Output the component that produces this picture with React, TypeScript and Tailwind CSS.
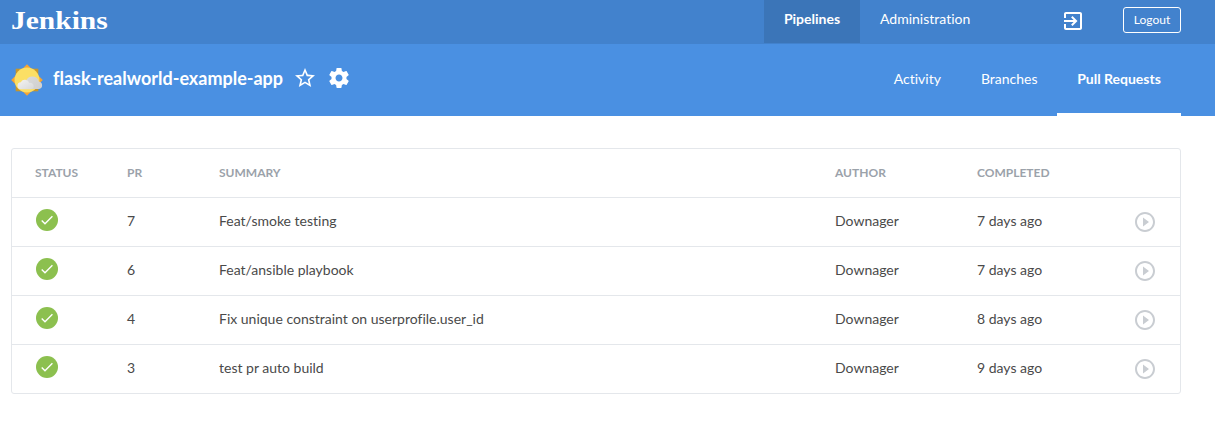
import React from "react";

const rows = [
  { pr: 7, summary: "Feat/smoke testing", author: "Downager", completed: "7 days ago" },
  { pr: 6, summary: "Feat/ansible playbook", author: "Downager", completed: "7 days ago" },
  { pr: 4, summary: "Fix unique constraint on userprofile.user_id", author: "Downager", completed: "8 days ago" },
  { pr: 3, summary: "test pr auto build", author: "Downager", completed: "9 days ago" },
];

const grid = "grid grid-cols-[92px_92px_616px_142px_156px_1fr] pl-[23px]";

function WeatherIcon() {
  return (
    <svg className="h-8 w-8" viewBox="0 0 32 32">
      <defs>
        <linearGradient id="cloud" x1="0" y1="0" x2="1" y2="1">
          <stop offset="0" stopColor="#dadada" />
          <stop offset="1" stopColor="#cfcfcf" />
        </linearGradient>
        <linearGradient id="cloudFront" x1="0" y1="0" x2="1" y2="1">
          <stop offset="0" stopColor="#f4f4f4" />
          <stop offset="1" stopColor="#d8d8d8" />
        </linearGradient>
      </defs>
      <path d="M4.700 4.700h22.600v22.600H4.700z" fill="#c7962b" />
      <path d="M16 .2 31.800 16 16 31.800.2 16z" fill="#f6a532" />
      <circle cx="16" cy="16" r="12.500" fill="#fbdf65" />
      <path d="M15 17.500a6.600 6.600 0 0 1 12.800 0 3.800 3.800 0 0 1 .2 7.500H17z" fill="url(#cloud)" />
      <path d="M10.200 25.200a3.500 3.500 0 0 1-.4-7 4.700 4.700 0 0 1 8.600.8 3.200 3.200 0 0 1 4.300 3 3.200 3.200 0 0 1-3 3.200z" fill="url(#cloudFront)" />
    </svg>
  );
}

function Glyph({ d, className }: { d: string; className: string }) {
  return (
    <svg viewBox="0 0 24 24" fill="currentColor" className={className}>
      <path d={d} />
    </svg>
  );
}

const STAR =
  "M22 9.240l-7.190-.620L12 2 9.190 8.630 2 9.240l5.460 4.730L5.820 21 12 17.270 18.180 21l-1.630-7.030L22 9.240zM12 15.400l-3.760 2.270 1-4.280-3.320-2.880 4.380-.380L12 6.100l1.710 4.040 4.380.380-3.320 2.880 1 4.280L12 15.400z";
const GEAR =
  "M19.430 12.980c.040-.320.070-.640.070-.980s-.030-.660-.070-.980l2.110-1.650c.190-.150.240-.420.120-.640l-2-3.460c-.120-.220-.390-.300-.610-.220l-2.490 1c-.520-.400-1.080-.730-1.690-.980l-.380-2.650C14.460 2.180 14.250 2 14 2h-4c-.250 0-.460.180-.490.420l-.380 2.650c-.610.250-1.170.590-1.690.980l-2.490-1c-.230-.090-.490 0-.610.220l-2 3.460c-.130.220-.070.490.120.640l2.110 1.650c-.040.320-.070.650-.070.980s.030.660.070.980l-2.110 1.650c-.190.150-.240.420-.120.640l2 3.460c.120.220.390.300.610.220l2.490-1c.520.400 1.080.730 1.690.980l.380 2.650c.030.240.240.420.490.420h4c.250 0 .460-.180.490-.420l.380-2.650c.610-.250 1.170-.590 1.690-.980l2.490 1c.230.090.490 0 .610-.220l2-3.460c.120-.220.070-.490-.120-.640l-2.110-1.650zM12 15.500c-1.930 0-3.500-1.570-3.500-3.500s1.570-3.500 3.500-3.500 3.500 1.570 3.500 3.500-1.570 3.500-3.500 3.500z";
const EXIT =
  "M10.090 15.590L11.500 17l5-5-5-5-1.410 1.410L12.670 11H3v2h9.670l-2.580 2.590zM19 3H5c-1.110 0-2 .9-2 2v4h2V5h14v14H5v-4H3v4c0 1.100.89 2 2 2h14c1.100 0 2-.9 2-2V5c0-1.100-.9-2-2-2z";
const PLAY =
  "M10 16.500l6-4.500-6-4.500v9zM12 2C6.480 2 2 6.480 2 12s4.480 10 10 10 10-4.480 10-10S17.520 2 12 2zm0 18c-4.410 0-8-3.590-8-8s3.590-8 8-8 8 3.590 8 8-3.590 8-8 8z";

export default function App() {
  return (
    <div className="h-[442px] w-[1215px] overflow-hidden bg-white font-['Lato',sans-serif] text-sm text-[#4a4a4a] [font-variant-ligatures:none]">
      <header className="flex h-11 items-start bg-[#4282cd] pr-[34px] pl-[11px] text-white">
        <div className="w-[753px]">
          <span className="block w-20 origin-left scale-x-[1.18] font-['Liberation_Serif',serif] text-[25px] leading-[41px] font-bold">Jenkins</span>
        </div>
        <nav className="flex leading-[38px]">
          <a className="h-[43px] w-24 bg-[#3b75b8] text-center font-bold">Pipelines</a>
          <a className="pl-5">Administration</a>
        </nav>
        <div className="ml-auto flex items-start">
          <Glyph d={EXIT} className="mt-[9px] mr-[38px] h-6 w-6" />
          <button className="mt-[7px] h-[26px] w-[58px] rounded-[3px] border border-white text-xs leading-6">Logout</button>
        </div>
      </header>

      <section className="flex h-[72px] items-start bg-[#4a90e2] pr-[34px] pl-[11px] text-white">
        <div className="mt-5">
          <WeatherIcon />
        </div>
        <h1 className="ml-[10px] w-[230px] text-lg leading-[69px] font-bold whitespace-nowrap">flask-realworld-example-app</h1>
        <Glyph d={STAR} className="mt-[22px] ml-[10px] h-6 w-6" />
        <Glyph d={GEAR} className="mt-[22px] ml-[10px] h-6 w-6" />
        <nav className="ml-auto flex h-full leading-[70px]">
          <a className="px-5">Activity</a>
          <a className="pr-[19.5px] pl-5">Branches</a>
          <a className="h-full w-[124px] border-b-[3px] border-white text-center font-bold">Pull Requests</a>
        </nav>
      </section>

      <main className="mt-8 ml-[11px] w-[1170px] rounded-[3px] border border-[#e4e7eb]">
        <div className={`${grid} h-12 text-xs leading-[48px] font-bold text-[#9ba2aa]`}>
          <span>STATUS</span>
          <span>PR</span>
          <span>SUMMARY</span>
          <span>AUTHOR</span>
          <span>COMPLETED</span>
        </div>
        {rows.map((r) => (
          <div key={r.pr} className={`${grid} h-[49px] border-t border-[#e4e7eb] leading-[46px]`}>
            <svg viewBox="0 0 24 24" className="mt-[10px] h-6 w-6">
              <circle cx="12" cy="12" r="11" fill="#8cc04f" />
              <path d="M6.700 12.400l3.300 3.300 7.400-7.400" fill="none" stroke="#fff" strokeWidth="1.400" />
            </svg>
            <span>{r.pr}</span>
            <span>{r.summary}</span>
            <span>{r.author}</span>
            <span>{r.completed}</span>
            <Glyph d={PLAY} className="mt-3 h-6 w-6 text-[#c9cdd2]" />
          </div>
        ))}
      </main>
    </div>
  );
}
